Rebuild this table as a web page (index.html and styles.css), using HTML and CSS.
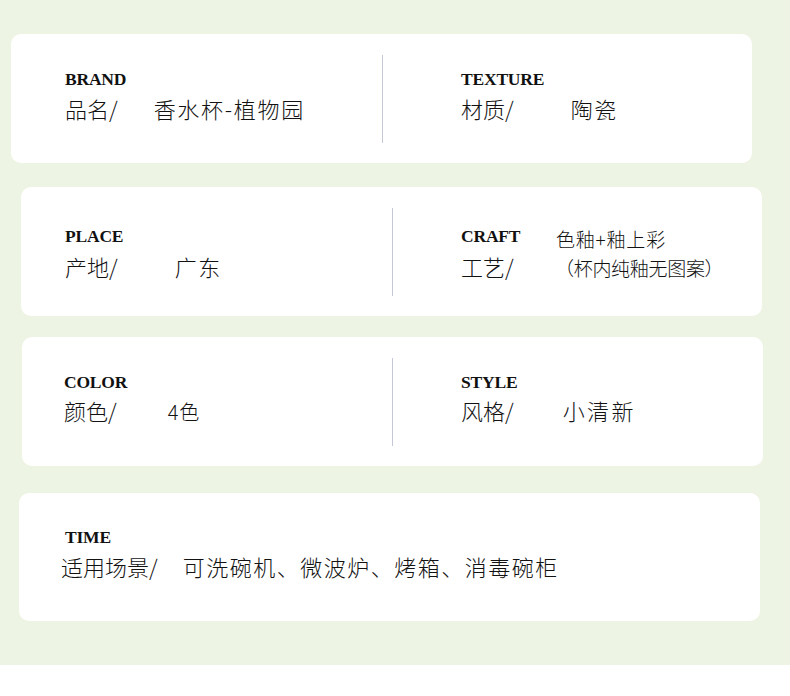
FILE: index.html
```html
<!DOCTYPE html>
<html lang="zh-CN">
<head>
<meta charset="utf-8">
<title>产品信息</title>
<link rel="stylesheet" href="styles.css">
</head>
<body>
<div class="sheet">
  <section class="card card-1">
    <div class="col col-left">
      <div class="label">BRAND</div>
      <div class="row"><span class="key">品名/</span><span class="val v-brand">香水杯-植物园</span></div>
    </div>
    <div class="divider"></div>
    <div class="col col-right">
      <div class="label">TEXTURE</div>
      <div class="row"><span class="key">材质/</span><span class="val v-texture">陶瓷</span></div>
    </div>
  </section>

  <section class="card card-2">
    <div class="col col-left">
      <div class="label">PLACE</div>
      <div class="row"><span class="key">产地/</span><span class="val v-place">广东</span></div>
    </div>
    <div class="divider"></div>
    <div class="col col-right craft">
      <div class="label">CRAFT</div>
      <div class="craft-val1">色釉+釉上彩</div>
      <div class="row"><span class="key">工艺/</span></div>
      <div class="craft-val2">（杯内纯釉无图案）</div>
    </div>
  </section>

  <section class="card card-3">
    <div class="col col-left">
      <div class="label">COLOR</div>
      <div class="row"><span class="key">颜色/</span><span class="val small v-color">4色</span></div>
    </div>
    <div class="divider"></div>
    <div class="col col-right">
      <div class="label">STYLE</div>
      <div class="row"><span class="key">风格/</span><span class="val v-style">小清新</span></div>
    </div>
  </section>

  <section class="card card-4">
    <div class="col col-full">
      <div class="label label-time">TIME</div>
      <div class="row"><span class="key">适用场景/</span><span class="val v-time">可洗碗机、微波炉、烤箱、消毒碗柜</span></div>
    </div>
  </section>
</div>
</body>
</html>
```

FILE: styles.css
```css
html, body {
  margin: 0;
  padding: 0;
  background: #ffffff;
}

.sheet {
  background: #eef4e4;
  height: 665px;
  box-sizing: border-box;
  padding-top: 34px;
  display: flex;
  flex-direction: column;
}

.card {
  background: #ffffff;
  border-radius: 10px;
  width: 741px;
  height: 129px;
  box-sizing: border-box;
  display: flex;
  align-items: stretch;
}

.card-1 { margin-left: 11px; padding-left: 54px; }
.card-2 { margin-left: 21px; margin-top: 24px; padding-left: 44px; }
.card-3 { margin-left: 22px; margin-top: 21px; padding-left: 42px; }
.card-4 { margin-left: 19px; margin-top: 27px; padding-left: 42px; height: 128px; }

.col {
  box-sizing: border-box;
  padding-top: 35px;
}
.card-2 .col { padding-top: 39px; }
.card-3 .col { padding-top: 35px; }
.card-4 .col { padding-top: 34px; }

.card-1 .col-left { width: 317px; }
.card-2 .col-left { width: 327px; }
.card-3 .col-left { width: 328px; }

.card-1 .col-right { padding-left: 78px; }
.card-2 .col-right { padding-left: 68px; }
.card-3 .col-right { padding-left: 68px; }

.divider {
  width: 1px;
  background: #c6c7d6;
  align-self: center;
  height: 88px;
}

.label {
  font-family: "Liberation Serif", "Times New Roman", serif;
  font-weight: bold;
  font-size: 17.5px;
  line-height: 20px;
  color: #111111;
  letter-spacing: -0.2px;
}

.label-time { margin-left: 4px; }

.row {
  display: flex;
  align-items: baseline;
  margin-top: 4px;
  font-family: "Noto Sans CJK SC", "Noto Sans", sans-serif;
  font-weight: 300;
  font-size: 22px;
  line-height: 30px;
  color: #121212;
}
.card-2 .row { margin-top: 5px; }
.card-3 .row { margin-top: 3px; }
.card-4 .row { margin-top: 4px; }

.val.small { font-size: 20px; letter-spacing: 1px; }

.v-brand { margin-left: 36px; letter-spacing: 1.7px; }
.v-place { margin-left: 57px; letter-spacing: 1.5px; }
.v-color { margin-left: 51px; }
.v-texture { margin-left: 57px; letter-spacing: 1.5px; }
.v-style { margin-left: 49px; letter-spacing: 2.4px; }
.v-time { margin-left: 25px; letter-spacing: 1.5px; }

.craft {
  display: grid;
  grid-template-columns: 95px auto;
  align-content: start;
}
.craft .row { margin-top: 5px; }
.craft-val1 {
  font-family: "Noto Sans CJK SC", "Noto Sans", sans-serif;
  font-weight: 300;
  font-size: 19px;
  line-height: 20px;
  letter-spacing: 0.8px;
  color: #121212;
  margin-top: 3px;
  margin-bottom: -3px;
}
.craft-val2 {
  font-family: "Noto Sans CJK SC", "Noto Sans", sans-serif;
  font-weight: 300;
  font-size: 19px;
  line-height: 30px;
  letter-spacing: -0.3px;
  color: #121212;
  margin-top: 7px;
  margin-bottom: -2px;
  margin-left: -1px;
}
```
